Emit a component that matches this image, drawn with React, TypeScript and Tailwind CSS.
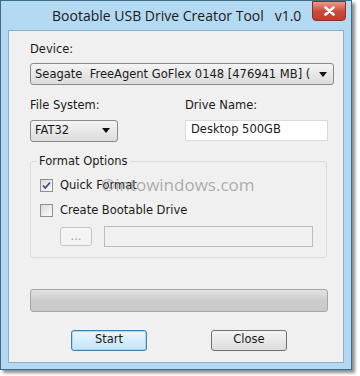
import React from "react";

const body = { fontFamily: '"DejaVu Sans", Verdana, sans-serif' };

const Arrow = () => (
  <svg width="8" height="5" viewBox="0 0 8 5" className="shrink-0">
    <path d="M0 0h8L4 5z" fill="#111" />
  </svg>
);

const Checkbox = ({ checked }: { checked?: boolean }) => (
  <span className="w-[13px] h-[13px] border border-[#8f8f8f] bg-gradient-to-br from-[#dcdcdc] to-[#fafafa] flex items-center justify-center shrink-0">
    {checked && (
      <svg width="9" height="9" viewBox="0 0 9 9">
        <path d="M1 4.5l2.3 2.5L8 1.5" fill="none" stroke="#3a4d8a" strokeWidth="1.8" />
      </svg>
    )}
  </span>
);

export default function App() {
  return (
    <div className="w-[360px] h-[376px] bg-white relative overflow-hidden">
      <div className="w-[352px] h-[370px] border border-[#3d6b88] bg-[#b4d9f2] flex flex-col shadow-[3px_3px_3px_rgba(0,0,0,0.45)]">
        {/* title bar */}
        <div className="h-[29px] flex items-start relative">
          <div
            className="flex-1 pt-[4px] text-[14px] text-[#1a1a1a] pl-[51px] whitespace-nowrap"
            style={{ fontFamily: '"Open Sans", "Noto Sans", sans-serif' }}
          >
            Bootable USB Drive Creator Tool&nbsp;&nbsp;&nbsp;v1.0
          </div>
          <div className="w-[34px] h-[20px] mr-[5px] rounded-b-[4px] border border-[#8a2f26] bg-gradient-to-b from-[#e89a8c] via-[#cc4b3b] to-[#c33a2a] flex items-center justify-center">
            <svg width="11" height="10" viewBox="0 0 11 10">
              <path d="M1.5 1.5l8 7M9.5 1.5l-8 7" stroke="#fff" strokeWidth="2.6" strokeLinecap="round" />
            </svg>
          </div>
        </div>
        {/* client */}
        <div
          className="mx-[7px] h-[333px] bg-[#f0f0f0] border border-[#8aaecb] relative text-[11.5px] text-[#1a1a1a]"
          style={body}
        >
          <div className="pl-[21px] pr-[12px] pt-[10px] flex flex-col">
            <div>Device:</div>
            <div className="mt-[5px] h-[22px] w-[304px] border border-[#8a8a8a] rounded-[3px] bg-gradient-to-b from-[#f4f4f4] to-[#dcdcdc] flex items-center pl-[4px] pr-[6px] gap-[4px]">
              <span className="flex-1 whitespace-nowrap overflow-hidden">
                Seagate&nbsp; FreeAgent GoFlex 0148 [476941 MB] (
              </span>
              <Arrow />
            </div>
            <div className="mt-[12px] flex">
              <div className="w-[155px] flex flex-col">
                <div>File System:</div>
                <div className="mt-[5px] h-[22px] w-[88px] border border-[#8a8a8a] rounded-[3px] bg-gradient-to-b from-[#f4f4f4] to-[#dcdcdc] flex items-center pl-[4px] pr-[7px]">
                  <span className="flex-1">FAT32</span>
                  <Arrow />
                </div>
              </div>
              <div className="flex flex-col">
                <div>Drive Name:</div>
                <div className="mt-[5px] h-[21px] w-[143px] border border-[#dadada] bg-white flex items-center pl-[5px]">
                  Desktop 500GB
                </div>
              </div>
            </div>
            {/* group */}
            <div className="mt-[19px] ml-[0px] w-[297px] h-[97px] border border-[#dcdcdc] rounded-[3px] relative px-[9px] pt-[15px]">
              <span className="absolute -top-[9px] left-[6px] px-[2px] bg-[#f0f0f0]">Format Options</span>
              <div className="flex items-center gap-[7px]">
                <Checkbox checked />
                <span>Quick Format</span>
              </div>
              <div className="flex items-center gap-[7px] mt-[8px]">
                <Checkbox />
                <span>Create Bootable Drive</span>
              </div>
              <div className="flex items-center mt-[7px] pl-[20px] gap-[12px]">
                <div className="w-[32px] h-[19px] border border-[#c4c4c4] rounded-[3px] bg-[#f4f4f4] text-[#9a9a9a] flex items-center justify-center leading-none">
                  ...
                </div>
                <div className="w-[209px] h-[21px] border border-[#bcbcbc] bg-[#f0f0f0]" />
              </div>
            </div>
            {/* progress */}
            <div className="mt-[31px] w-[298px] h-[23px] border border-[#a6a6a6] rounded-[3px] bg-gradient-to-b from-[#e2e2e2] via-[#cdcdcd] to-[#c9c9c9]" />
            <div className="mt-[18px] flex gap-[64px] pl-[41px]">
              <div className="w-[76px] h-[21px] border border-[#3c7fb1] rounded-[3px] bg-gradient-to-b from-[#eaf6fd] to-[#c5e3f5] shadow-[inset_0_0_0_1px_#a7d8f5] flex items-center justify-center">
                Start
              </div>
              <div className="w-[76px] h-[21px] border border-[#707070] rounded-[3px] bg-gradient-to-b from-[#f4f4f4] to-[#dddddd] flex items-center justify-center">
                Close
              </div>
            </div>
          </div>
          <div
            className="absolute left-[92px] top-[141px] text-[17px] text-[#8c8c8c]/70 pointer-events-none"
            style={{ fontFamily: '"Open Sans", sans-serif' }}
          >
            ©intowindows.com
          </div>
        </div>
      </div>
    </div>
  );
}
